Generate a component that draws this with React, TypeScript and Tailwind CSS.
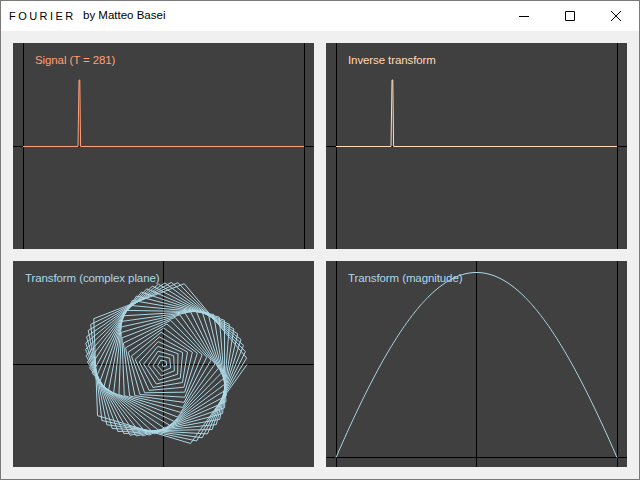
import React from "react";

const T = 281;
const L = 10;
const W = 281;

function mag(u: number) {
  const sine = Math.sin(Math.PI * u);
  const parabola = 1 - Math.pow(Math.abs(2 * u - 1), 2);
  return 0.6 * sine + 0.4 * parabola;
}

function pulse(color: string) {
  const d = `M${L} 103.5H65L66 37H66.8L67.6 103.5H${L + W}`;
  return <path d={d} fill="none" stroke={color} strokeWidth={1} />;
}

function magnitudePath() {
  let d = "";
  for (let i = 0; i <= W; i++) {
    const x = L + i;
    const y = 196.5 - 185 * mag(i / W);
    d += (i ? "L" : "M") + x + " " + y.toFixed(2);
  }
  return d;
}

function complexPath() {
  let d = "";
  const phi = (2 * Math.PI * 55.5) / T;
  const n = Math.floor(T / 2);
  for (let k = 0; k <= n; k++) {
    const r = 83.5 * Math.cos((Math.PI * k) / T);
    const a = phi * k;
    const x = 150.5 + r * Math.cos(a);
    const y = 103.5 + r * Math.sin(a);
    d += (k ? "L" : "M") + x.toFixed(2) + " " + y.toFixed(2);
  }
  return d;
}

function Axes({ v, h }: { v: number[]; h: number }) {
  return (
    <g stroke="#000000" strokeWidth={1} shapeRendering="crispEdges">
      {v.map((x) => (
        <line key={x} x1={x + 0.5} x2={x + 0.5} y1={0} y2={206} />
      ))}
      <line x1={0} x2={301} y1={h + 0.5} y2={h + 0.5} />
    </g>
  );
}

function Panel({
  label,
  color,
  labelClass,
  children,
}: {
  label: string;
  color: string;
  labelClass: string;
  children: React.ReactNode;
}) {
  return (
    <div className="relative h-[206px] w-[301px] bg-[#404040]">
      <svg width={301} height={206} viewBox="0 0 301 206" className="block">
        {children}
      </svg>
      <span className={labelClass} style={{ color }}>
        {label}
      </span>
    </div>
  );
}

const labelBase =
  "absolute whitespace-nowrap text-[11.5px] tracking-[-0.1px] leading-[16px] font-['Liberation_Sans',Arial,sans-serif]";

export default function App() {
  return (
    <div className="flex h-[480px] w-[640px] flex-col border border-[#7a7a7a] bg-[#f0f0f0] font-['Liberation_Sans',Arial,sans-serif]">
      <div className="flex h-[30px] items-center justify-between bg-white pl-2 text-[11.5px] text-black">
        <div className="flex items-center whitespace-pre">
          <span className="w-[74px] text-[11px] [word-spacing:-0.6px]">F O U R I E R</span>
          <span>by Matteo Basei</span>
        </div>
        <div className="flex h-full">
          <div className="flex h-full w-[46px] items-center justify-center">
            <svg width={10} height={10} viewBox="0 0 10 10">
              <path d="M0 5.5H10" stroke="#000" fill="none" />
            </svg>
          </div>
          <div className="flex h-full w-[46px] items-center justify-center">
            <svg width={10} height={10} viewBox="0 0 10 10">
              <path d="M.5 .5H9.5V9.5H.5Z" stroke="#000" fill="none" />
            </svg>
          </div>
          <div className="flex h-full w-[46px] items-center justify-center">
            <svg width={10} height={10} viewBox="0 0 10 10">
              <path d="M0 0L10 10M10 0L0 10" stroke="#000" fill="none" />
            </svg>
          </div>
        </div>
      </div>
      <div className="grid flex-1 grid-cols-[301px_301px] grid-rows-[206px_206px] gap-3 p-3">
        <Panel label="Signal (T = 281)" color="#ffa07a" labelClass={labelBase + " left-[22px] top-[9px]"}>
          <Axes v={[10, 291]} h={103} />
          {pulse("#ffa07a")}
        </Panel>
        <Panel label="Inverse transform" color="#ffdab9" labelClass={labelBase + " left-[22px] top-[9px]"}>
          <Axes v={[10, 291]} h={103} />
          {pulse("#ffdab9")}
        </Panel>
        <Panel label="Transform (complex plane)" color="#add8e6" labelClass={labelBase + " left-[12px] top-[9px]"}>
          <Axes v={[150]} h={103} />
          <path d={complexPath()} fill="none" stroke="#add8e6" strokeWidth={1} />
        </Panel>
        <Panel label="Transform (magnitude)" color="#add8e6" labelClass={labelBase + " left-[22px] top-[9px]"}>
          <Axes v={[10, 150, 291]} h={196} />
          <path d={magnitudePath()} fill="none" stroke="#add8e6" strokeWidth={1} />
        </Panel>
      </div>
    </div>
  );
}
